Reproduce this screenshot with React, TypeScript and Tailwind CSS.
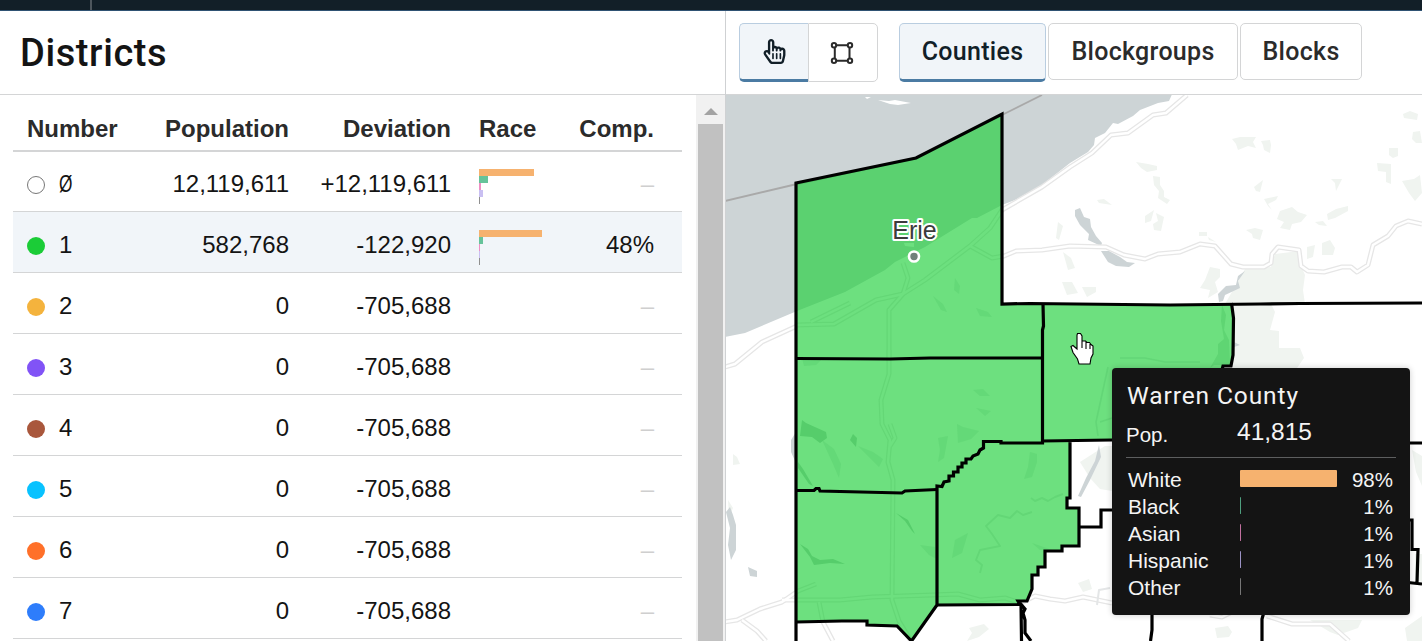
import React from "react";
import { FaRegHandPointer } from "react-icons/fa";

type District = {
  label: string;
  color: string;
  population: string;
  deviation: string;
  race?: number[];
  comp?: string;
};

const raceColors = ["#f6b26f", "#66c39a", "#ef8fc4", "#c9bff2", "#8f8f8f"];

const districts: District[] = [
  { label: "Ø", color: "", population: "12,119,611", deviation: "+12,119,611", race: [55, 9, 2, 4, 1] },
  { label: "1", color: "#1bcc37", population: "582,768", deviation: "-122,920", race: [63, 4, 1, 1, 1], comp: "48%" },
  { label: "2", color: "#f4b33d", population: "0", deviation: "-705,688" },
  { label: "3", color: "#8153f6", population: "0", deviation: "-705,688" },
  { label: "4", color: "#a9573c", population: "0", deviation: "-705,688" },
  { label: "5", color: "#08c2ff", population: "0", deviation: "-705,688" },
  { label: "6", color: "#ff7029", population: "0", deviation: "-705,688" },
  { label: "7", color: "#2e7dfb", population: "0", deviation: "-705,688" },
];

const grid = "grid grid-cols-[107px_155px_162px_103px_100px] pl-[14px]";

function DistrictRow({ d, index }: { d: District; index: number }) {
  const size = index === 0 ? "h-[60px] pb-px" : "h-[61px]";
  const tint = index === 1 ? "bg-[#f1f5f9]" : "bg-white";
  return (
    <div className={`${grid} ${size} ${tint} items-center border-b border-[#d4d5d6] pt-[5px] text-2xl leading-[27px] text-[#141414]`}>
      <div className="flex items-center">
        <span
          className={`mt-0.5 size-[18px] shrink-0 rounded-full ${index === 0 ? "border border-[#777] bg-white" : ""}`}
          style={d.color ? { backgroundColor: d.color } : undefined}
        />
        <span className={index === 0 ? "ml-3.5 inline-block origin-left scale-x-[0.72]" : "ml-3.5"}>{d.label}</span>
      </div>
      <div className="text-right">{d.population}</div>
      <div className="text-right">{d.deviation}</div>
      <div className="mt-[6px] ml-7 flex flex-col">
        {d.race?.map((w, i) => (
          <span key={i} className="h-[7px]" style={{ width: w, backgroundColor: raceColors[i] }} />
        ))}
      </div>
      <div className={d.comp ? "text-right" : "text-right text-[#cfcfcf]"}>{d.comp ?? "–"}</div>
    </div>
  );
}

const parks = [
  "M1232,139l8,-2 16,0 -3,5 3,6 -8,-2 -10,4 -2,-6z",
  "M1261,141l9,-1 1,5 -1,8 -6,-3 -1,-5z",
  "M1136,162l12,2 9,2 0,4 -10,2 -6,-4z",
  "M1153,176l7,1 0,8 4,6 0,6 6,3 -3,4 -9,-6 1,-7 -5,-6z",
  "M1097,200l7,-1 8,6 -13,-2z",
  "M1145,216l9,-6 -3,11 -6,2z M1156,213l8,4 -3,14 -7,-1 -1,-6 5,-3z",
  "M1254,187l9,-7 -3,12 -4,-1z",
  "M1264,199l14,-3 -2,4 -8,4 4,6 -4,-4z",
  "M1280,211l12,-4 6,5 9,3 -6,7 -9,2 -2,6 -10,-2 4,-6 -7,-3z",
  "M1331,179l11,0 -6,12 -1,-8z M1327,214l9,-5 12,-3 0,5 -13,7 -7,2z",
  "M1315,222l8,-1 4,5 -8,-1z M1403,114l7,-3 8,3 -1,6 -13,-2z",
  "M1413,132l7,-1 2,12 -6,0 -4,-4z M1389,148l9,0 0,8 -5,2 -4,-3z",
  "M1377,163l14,1 0,20 -5,-2 0,-10 -8,-1z",
  "M1402,181l12,-2 6,-4 2,18 -7,8 -6,-8z",
  "M1246,230l9,-2 8,2 -3,10 -7,-2 -1,-4z",
  "M1199,232l8,0 0,4 -8,0z M1208,237l8,5 -7,-2z",
  "M1307,247l8,-2 -2,12 -6,2z M1322,243l8,-3 5,8 -2,7 -11,0z",
  "M1210,267l10,2 0,8 -5,5 3,10 -10,6 2,-8 -10,-2 5,-8z",
  "M1063,252l8,6 4,10 -7,2z M1062,282l10,0 6,11 -11,2z M1082,287l14,0 0,5 -9,5z",
  "M1058,222l5,4 -4,14 -3,-2z",
  "M733,454l4,3 3,7 -7,1z M728,500l5,8 -4,9z",
  "M1080,462l25,-16 7,0 0,45 -12,-2 -10,-11z",
  "M1078,583l11,-4 3,10 -9,3z",
  "M969,628l15,-4 5,5 -10,8 -12,4 5,-8z",
  "M1215,628l13,-2 4,6 -3,5 -12,1z M1310,620l52,0 -4,8 -20,7 -8,-3z M1405,628l17,-12 0,25 -15,0z",
  "M1412,450l10,6 0,30 -6,-14z",
  "M1415,554l7,0 0,28 -7,-2z",
];

const greenParks = [
  "M973,390l10,-1 7,7 -10,0z M976,408l15,3 -6,5z M938,438l10,-2 -4,22 -6,4 2,-12z",
  "M957,424l6,3 16,4 -8,8 -13,4z",
  "M1030,452l7,2 0,8 -5,15 -8,2 4,-12z M955,540l13,-7 -6,20 -10,5z M1032,543l20,7 -12,0z",
  "M920,545l15,2 2,12 -8,-4z M802,358l22,-1 -8,8 -12,1z",
  "M955,278l5,8 -1,8 -5,-4z M933,296l10,8 4,8 -6,-2z M976,308l12,4 4,5 -12,-1z",
  "M822,440l12,9 7,15 -2,14 -6,-14z M858,446l15,6 10,7 -4,8z",
];

const roads = [
  "M725,367 L735,364 L762,342 L797,326",
  "M797,325 L834,324 L876,300 L903,294 L925,280 L970,246 L990,228 L1002,210 L1042,187 L1070,167 L1092,153 L1111,135 L1128,133 L1153,115 L1166,113 L1187,95",
  "M970,246 L992,258 L1004,256 L1016,251 L1042,250 L1070,246 L1106,247 L1124,255 L1145,259 L1158,254 L1180,252 L1200,244 L1215,246 L1231,264 L1243,267 L1264,267 L1271,263 L1272,254 L1278,247 L1299,250 L1301,266 L1308,271 L1324,272 L1342,267 L1351,267 L1357,272 L1368,265 L1373,245 L1388,236 L1396,226 L1408,221 L1422,224",
  "M889,358 L889,310 L903,294",
  "M811,322 L850,303 M903,263 L908,278 L903,294",
  "M889,350 L889,374 L881,400 L882,424 L890,440 L888,462 L893,480 L892,600 L899,621 L911,641 M890,424 L895,438 L890,446",
  "M725,622 L737,620 L760,609 L782,602 L798,591 L816,584 M742,620 L757,631 L766,641",
  "M782,600 L840,600 L872,597 L932,595 L958,594 L980,600 L1005,598 L1021,603 L1035,596 L1050,599 L1065,601 L1083,597 L1112,603",
  "M819,602 L823,622 L833,641 M1210,615 L1222,617 L1234,611 M1267,616 L1292,624 L1330,624 L1349,641",
];

function CountyMap() {
  const outline =
    "M796,183 L916,158 L1002,114 L1002,304 L1231,304 L1233,315 L1233,355 L1231,366 L1223,367 L1222,440 L1070,441 L1070,498 L1067,498 L1067,508 L1079,508 L1079,546 L1062,546 L1062,551 L1045,551 L1045,567 L1038,567 L1038,575 L1032,575 L1032,589 L1027,601 L1018,601 L1020,604 L937,605 L911.5,641 L897,626 L867,625 L867,621 L796,622 Z";
  return (
    <svg className="block h-full w-full" viewBox="726 95 696 546" preserveAspectRatio="none">
      <rect x="726" y="95" width="696" height="546" fill="#fff" />
      <path
        fill="#cdd4d6"
        d="M725,95 L1171.7,95 L1169,101 L1158,103 L1140,110 L1133,116 L1118,124 L1113,123 L1105,133 L1095,138 L1094,145 L1088,152 L1070,163 L1042,185 L1015,200 L1002,205 L977,218 L972,218 L925,247 L895,262 L885,270 L845,292 L797,311 L745,333 L725,337 Z"
      />
      <path fill="#fff" d="M865,97l6,0 -4,2z M878,100l11,1 6,-1 16,3 -13,2 -8,-1z M904,243l10,0 0,4 -9,-1z" />
      <g fill="#f0f4f0">
        {parks.map((d) => <path key={d} d={d} />)}
        <path d="M1245,269 L1271,267 L1275,254 L1299,251 L1302,268 L1305,275 L1303,290 L1305,304 L1271,304 L1275,312 L1270,330 L1279,331 L1279,348 L1300,348 L1304,358 L1297,368 L1233,368 L1233,304 L1225,304 Z" />
      </g>
      <g fill="#cdd4d6">
        <path d="M1075,210 L1080,208 L1084,217 L1090,219 L1091,227 L1096,236 L1102,243 L1101,246 L1088,240 L1089,234 L1080,225 L1075,216Z" />
        <path d="M1101,251 L1109,251 L1120,257 L1127,262 L1135,263 L1129,267 L1116,266 L1108,262Z" />
        <path d="M1245,271 L1238,281 L1240,288 L1225,295 L1223,301 L1219,302 L1218,294 L1226,286 L1236,285 L1238,276Z M1234,342l6,3 -6,2z" />
        <path d="M726,512 L730,507 L733,515 L736,525 L736,550 L731,560 L728,545 L730,528Z M796,432l-5,8 0,12 5,11z M748,567l9,4 0,6 -7,-1z" />
        <path d="M1099,445l2,12 -11,23 -9,17 -3,-1 8,-18 9,-17z" />
      </g>
      <g fill="none" strokeLinejoin="round">
        {roads.map((d) => <path key={d} d={d} stroke="#e6e6e6" strokeWidth="5" />)}
        {roads.map((d) => <path key={d} d={d} stroke="#fff" strokeWidth="2.4" />)}
        <path
          d="M1063,494 L1055,497 L1048,501 L1042,498 L1035,501 L1031,498 M1032,512 L1023,515 L1017,511 L1010,518 L998,515 L986,526 L992,534 L1000,546 L980,550 L976,560 L982,565 L980,573 M1097,605 L1099,590 L1110,588"
          stroke="#e4e6e7"
          strokeWidth="2"
        />
        <path d="M725,201 L797,184 L916,158 L1002,115 L1042,95" stroke="#a9a9a9" strokeWidth="1.8" />
      </g>
      <path d={outline} fill="#1bce37" fillOpacity="0.64" />
      <g fill="#5fd473" fillOpacity="0.6">
        {greenParks.map((d) => <path key={d} d={d} />)}
      </g>
      <g fill="#56cd6b">
        <path d="M802,420 L806,423 L826,432 L827,438 L820,443 L812,437 L800,436Z M853,434l4,4 -1,9 -6,-7z M798,462l5,7 10,17 -4,-2 -11,-16z" />
        <path d="M800,544 L808,549 L812,556 L820,560 L833,559 L845,564 L830,563 L814,565 L810,557Z M896,513 L908,520 L915,534 L912,531 L905,521Z" />
        <path d="M1222,305l4,10 -2,15 5,10 1,25 -16,0 -4,3 8,-14 0,-10 6,-5 -3,-18z" opacity="0.6" />
      </g>
      <g stroke="#5fd273" strokeWidth="1.6" fill="none">
        <path d="M1120,358 L1145,358 L1165,362 L1200,362 M1108,367 L1096,422 L1098,436 M1100,422 L1112,418" opacity="0.7" />
      </g>
      <g fill="none" stroke="#000" strokeWidth="3.2" strokeLinejoin="miter">
        <path d="M796,641 L796,183 L916,158 L1002,114 L1002,304 L1030,303.5 L1170,305 L1260,304 L1300,303.5 L1422,303" />
        <path d="M796,358.5 L890,359 L930,358 L1043,358 M1043,304 L1043.5,326 L1042.5,330 L1042.5,443 L1001,443 L1001,441.5 L983.5,441.5 L983.5,448 L980,450 L978,454 L973,456 L971,459 L966,459 L966,463 L962,463 L962,467 L958,467 L958,472 L953.5,472 L953.5,476 L949,476 L949,481 L944,482 L942,486.500 L937,486 L937,605 L911.5,641 L897,626 L867,625 L867,621 L842,621 L796,622" />
        <path d="M796,490.500 L814,490.500 L816,488.500 L819,488.500 L820,491 L902,493 L905,491 L937,489.500" />
        <path d="M1042,441 L1112,440 M1070,440 L1070,498 L1067,498 L1067,508 L1079,508 L1079,546 L1062,546 L1062,551 L1045,551 L1045,567 L1038,567 L1038,575 L1032,575 L1032,589 L1027,601 L1018,601 L1020,604.500 L937,605" />
        <path d="M1079,527 L1101,527 L1101,510 L1113,510 M1021,604 L1021.500,641 M1020,603 L1025,609 L1023,613 L1025,620 L1025,633 L1031,641" />
        <path d="M1152,612 L1152,630 L1150.500,641 M1264,612 L1262,619 L1262,641 M1231.500,303 L1233.500,318 L1233,355 L1231,366 L1223,366 L1222,370" />
        <path d="M1408,443 L1422,443 M1408,520 L1412,520 L1412,549.500 L1418,549.500 L1417,583 M1408,582.500 L1422,584" />
      </g>
      <circle cx="914" cy="256.500" r="5" fill="#71807a" stroke="#fff" strokeWidth="2.600" />
      <text
        x="914.500"
        y="238.500"
        textAnchor="middle"
        fontSize="25"
        fontFamily="'Liberation Sans', Arial, sans-serif"
        fill="#3b3b3b"
        stroke="#fff"
        strokeWidth="4"
        strokeLinejoin="round"
        paintOrder="stroke"
      >
        Erie
      </text>
      <path
        d="M1077.500,333.500 L1080.500,333.500 L1082,336 L1082,341 L1085.500,341 L1087,342.500 L1089.500,342.500 L1091,344.500 L1093,346 L1093,354 L1091,358 L1090,364 L1079,364 L1077.500,359 L1073,352.500 L1071,346.500 L1073,345.500 L1077,349 L1077,335Z M1082,340V348 M1086,342V349 M1090,344V349"
        fill="#fff"
        stroke="#000"
        strokeWidth="1.100"
      />
    </svg>
  );
}

const tooltipRows = [
  { name: "White", pct: 98, color: "#f6b26f" },
  { name: "Black", pct: 1, color: "#4f9f7f" },
  { name: "Asian", pct: 1, color: "#c1709f" },
  { name: "Hispanic", pct: 1, color: "#9c93c6" },
  { name: "Other", pct: 1, color: "#777777" },
];

function CountyTooltip() {
  return (
    <div className="absolute top-[273px] left-[386px] h-[247px] w-[298px] rounded-[4px] bg-[#141414] px-[14px] text-[21px] text-[#f4f4f4] shadow-[0_0_6px_rgba(0,0,0,0.2)]">
      <div className="pt-[13px] pl-px font-['Roboto'] text-[24.500px] leading-[30px] tracking-[0.9px]">Warren County</div>
      <div className="flex h-[47px] items-baseline border-b border-[#5d5e5f] pt-[9px]">
        <span className="w-[111px] text-[20.500px] leading-[28px]">Pop.</span>
        <span className="-translate-y-[2px] text-[24.500px] leading-[28px]">41,815</span>
      </div>
      <div className="pt-[8px]">
        {tooltipRows.map((r) => (
          <div key={r.name} className="flex h-[27px] items-center pl-[2px]">
            <span className="w-[112px] pt-px leading-[26px]">{r.name}</span>
            <span className="mb-[3px] h-[17px] rounded-[1px]" style={{ width: r.pct === 98 ? 97 : 1, backgroundColor: r.color }} />
            <span className="flex-1 pt-px pr-[3px] text-right text-[20.500px] leading-[26px]">{r.pct}%</span>
          </div>
        ))}
      </div>
    </div>
  );
}

const levelButton = "flex items-center justify-center rounded-[5px] border font-['Roboto'] text-[25px] font-medium";

export default function App() {
  return (
    <div className="flex h-[641px] w-[1422px] flex-col overflow-hidden bg-white font-['Liberation_Sans',Arial,sans-serif]">
      <div className="h-[11px] shrink-0 border-b border-[#2f5273] bg-[#121f28]">
        <div className="h-[10px] w-[92px] border-r-2 border-[#4d565d]" />
      </div>
      <div className="flex min-h-0 flex-1">
        <section className="flex w-[726px] flex-col border-r border-[#cfd1d3]">
          <header className="h-[84px] shrink-0 border-b border-[#d4d5d6] pt-[19px] pl-5">
            <h1 className="font-['Roboto'] text-[38px] leading-[46px] font-medium tracking-[0.6px] text-[#141414]">Districts</h1>
          </header>
          <div className="flex min-h-0 flex-1">
            <div className="w-[683px] pl-[13px]">
              <div className="w-[669px]">
                <div className={`${grid} h-[57px] border-b-2 border-[#d4d5d6] pt-[20px] text-2xl leading-[27px] font-bold text-[#2b2b2b]`}>
                  <div>Number</div>
                  <div className="text-right">Population</div>
                  <div className="text-right">Deviation</div>
                  <div className="pl-7">Race</div>
                  <div className="text-right">Comp.</div>
                </div>
                {districts.map((d, i) => <DistrictRow key={d.label} d={d} index={i} />)}
              </div>
            </div>
            <div className="ml-[13px] flex w-[29px] flex-col items-center bg-[#f1f1f1]">
              <div className="flex h-[29px] w-full shrink-0 items-center justify-center">
                <svg width="14" height="7" viewBox="0 0 14 7" className="mt-[3px]"><path d="M7,0 L14,7 H0Z" fill="#a3a3a3" /></svg>
              </div>
              <div className="w-[25px] flex-1 bg-[#c1c1c1]" />
            </div>
          </div>
        </section>
        <section className="flex w-[696px] flex-col">
          <header className="flex h-[84px] shrink-0 items-start border-b border-[#d4d5d6] pt-3 pl-[13px]">
            <div className="flex h-[59px]">
              <button className="flex w-[69px] items-center justify-center rounded-l-[5px] border border-r-0 border-b-[3px] border-[#b9cde0] border-b-[#4b7ba3] bg-[#f1f5f9] text-[#121f28]">
                <FaRegHandPointer size={25} />
              </button>
              <button className="flex w-[70px] items-center justify-center rounded-r-[5px] border border-[#d4d5d6] bg-white">
                <svg width="24" height="24" viewBox="0 0 24 24" className="mr-0.5" fill="none" stroke="#2b2b2b" strokeWidth="2">
                  <path d="M6.500,4.300 H17.500 M6.500,19.700 H17.500 M4.800,6.500 V17.500 M19.500,6.500 V17.500" />
                  <circle cx="4" cy="4.300" r="2.200" />
                  <circle cx="20" cy="4.300" r="2.200" />
                  <circle cx="4" cy="19.700" r="2.200" />
                  <circle cx="20" cy="19.700" r="2.200" />
                </svg>
              </button>
            </div>
            <button className={`${levelButton} ml-[21px] h-[59px] w-[147px] border-b-[3px] border-[#b9cde0] border-b-[#4b7ba3] bg-[#f1f5f9] tracking-[0.3px] text-[#121f28]`}>Counties</button>
            <button className={`${levelButton} ml-0.5 h-[57px] w-[190px] border-[#d4d5d6] tracking-[0.3px] text-[#2b2b2b]`}>Blockgroups</button>
            <button className={`${levelButton} ml-0.5 h-[57px] w-[122px] border-[#d4d5d6] tracking-[0.3px] text-[#2b2b2b]`}>Blocks</button>
          </header>
          <div className="relative h-[546px]">
            <CountyMap />
            <CountyTooltip />
          </div>
        </section>
      </div>
    </div>
  );
}
